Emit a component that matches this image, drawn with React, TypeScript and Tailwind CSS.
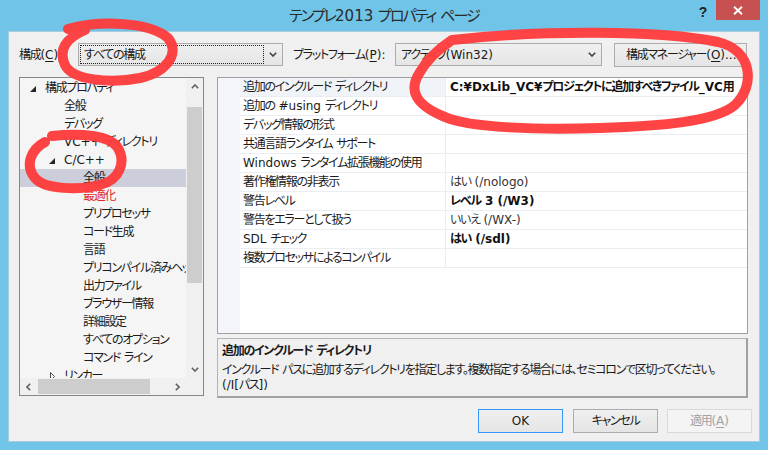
import React from "react";

const CJK_RE = /([\u3000-\u30ff\u3400-\u9fff\uff00-\uffef]+)/;

function J({ t, big }: { t: string; big?: boolean }) {
  const parts = t.split(CJK_RE);
  return (
    <span>
      {parts.map((p, i) =>
        p === "" ? null : CJK_RE.test(p) ? (
          <span key={i} className={big ? "tracking-[-1.9px]" : "tracking-[-1.3px]"}>
            {p}
          </span>
        ) : (
          <span key={i}>{p}</span>
        )
      )}
    </span>
  );
}

type TreeRow = {
  lvl: number;
  text: string;
  tri?: "open" | "closed";
  selected?: boolean;
  red?: boolean;
};

const treeRows: TreeRow[] = [
  { lvl: 0, text: "構成プロパティ", tri: "open" },
  { lvl: 1, text: "全般" },
  { lvl: 1, text: "デバッグ" },
  { lvl: 1, text: "VC++ ディレクトリ" },
  { lvl: 1, text: "C/C++", tri: "open" },
  { lvl: 2, text: "全般", selected: true },
  { lvl: 2, text: "最適化", red: true },
  { lvl: 2, text: "プリプロセッサ" },
  { lvl: 2, text: "コード生成" },
  { lvl: 2, text: "言語" },
  { lvl: 2, text: "プリコンパイル済みヘッダー" },
  { lvl: 2, text: "出力ファイル" },
  { lvl: 2, text: "ブラウザー情報" },
  { lvl: 2, text: "詳細設定" },
  { lvl: 2, text: "すべてのオプション" },
  { lvl: 2, text: "コマンド ライン" },
  { lvl: 1, text: "リンカー", tri: "closed" },
];

const PL = ["pl-[10px]", "pl-[29px]", "pl-[48px]"];

type GridRow = { label: string; value?: string; bold?: boolean };
const gridRows: GridRow[] = [
  { label: "追加のインクルード ディレクトリ", value: "C:¥DxLib_VC¥プロジェクトに追加すべきファイル_VC用", bold: true },
  { label: "追加の #using ディレクトリ" },
  { label: "デバッグ情報の形式" },
  { label: "共通言語ランタイム サポート" },
  { label: "Windows ランタイム拡張機能の使用" },
  { label: "著作権情報の非表示", value: "はい (/nologo)" },
  { label: "警告レベル", value: "レベル 3 (/W3)", bold: true },
  { label: "警告をエラーとして扱う", value: "いいえ (/WX-)" },
  { label: "SDL チェック", value: "はい (/sdl)", bold: true },
  { label: "複数プロセッサによるコンパイル" },
];

function ChevDown({ color = "#404040" }: { color?: string }) {
  return (
    <svg width="8" height="5" viewBox="0 0 8 5">
      <path d="M0.8 0.8 L4 4 L7.2 0.8" stroke={color} strokeWidth="1.6" fill="none" />
    </svg>
  );
}
function ChevUp() {
  return (
    <svg width="8" height="5" viewBox="0 0 8 5">
      <path d="M0.8 4.2 L4 1 L7.2 4.2" stroke="#606060" strokeWidth="1.6" fill="none" />
    </svg>
  );
}
function ChevLeft() {
  return (
    <svg width="5" height="8" viewBox="0 0 5 8">
      <path d="M4.2 0.8 L1 4 L4.2 7.2" stroke="#606060" strokeWidth="1.6" fill="none" />
    </svg>
  );
}
function ChevRight() {
  return (
    <svg width="5" height="8" viewBox="0 0 5 8">
      <path d="M0.8 0.8 L4 4 L0.8 7.2" stroke="#606060" strokeWidth="1.6" fill="none" />
    </svg>
  );
}

function Combo({ width, text, focus }: { width: string; text: string; focus?: boolean }) {
  return (
    <div className={`${width} h-[23px] flex items-center border border-[#acacac] bg-gradient-to-b from-[#f0f0f0] to-[#e5e5e5] p-[1px]`}>
      <div className={`flex-1 h-full flex items-center pl-[3px] whitespace-nowrap ${focus ? "border border-dotted border-[#222]" : "border border-transparent"}`}>
        <J t={text} />
      </div>
      <div className="w-[17px] h-full flex items-center justify-center">
        <ChevDown />
      </div>
    </div>
  );
}

function Button({ children, cls }: { children: React.ReactNode; cls: string }) {
  return (
    <div className={`w-[85px] h-[24px] flex items-center justify-center whitespace-nowrap ${cls}`}>{children}</div>
  );
}

export default function App() {
  return (
    <div className="relative w-[768px] h-[450px] overflow-hidden bg-[#6fc4e8] text-[12px] leading-none text-[#1a1a1a] [font-family:'DejaVu_Sans','Noto_Sans_CJK_JP',sans-serif] [font-feature-settings:'palt']">
      {/* title bar */}
      <div className="flex h-[31px]">
        <div className="w-[78px]" />
        <div className="flex-1 pt-[9px] text-center text-[15px] text-[#2a2a2a] whitespace-nowrap">
          <J t="テンプレ2013 プロパティ ページ" big />
        </div>
        <div className="w-[78px] flex items-start">
          <div className="w-[26px] pt-[5px] text-center text-[14px] font-bold text-[#222] [font-family:'Liberation_Sans',sans-serif]">?</div>
          <div className="w-[44px] h-[20px] bg-[#c75050] flex items-center justify-center">
            <svg width="10" height="9" viewBox="0 0 10 9">
              <path d="M1 0.8 L9 8.2 M9 0.8 L1 8.2" stroke="#ffffff" strokeWidth="1.9" />
            </svg>
          </div>
        </div>
      </div>

      {/* client */}
      <div className="mx-[8px] h-[411px] bg-[#f0f0f0] border border-[#a9cbdb] pl-[10px] pr-[11px] pt-[11px] flex flex-col">
        {/* top row */}
        <div className="flex items-center h-[23px]">
          <div className="w-[59px] whitespace-nowrap">
            <J t="構成" />(<span className="underline underline-offset-2">C</span>):
          </div>
          <Combo width="w-[205px]" text="すべての構成" focus />
          <div className="ml-[10px] w-[102px] whitespace-nowrap">
            <J t="プラットフォーム" />(<span className="underline underline-offset-2">P</span>):
          </div>
          <Combo width="w-[207px]" text="アクティブ(Win32)" />
          <div className="ml-[12px] w-[133px] h-[24px] border border-[#acacac] bg-gradient-to-b from-[#f0f0f0] to-[#e5e5e5] flex items-center pl-[11px] whitespace-nowrap">
            <J t="構成マネージャー" />(<span className="underline underline-offset-2">O</span>)...
          </div>
        </div>

        {/* main area */}
        <div className="flex mt-[11px]">
          {/* tree */}
          <div className="w-[185px] h-[319px] border border-[#828790] bg-[#f5f5f5] flex flex-col">
            <div className="flex h-[300px]">
              <div className="w-[166px] h-full overflow-hidden pt-[1px]">
                {treeRows.map((r, i) => (
                  <div
                    key={i}
                    className={`flex items-center h-[18px] whitespace-nowrap ${PL[r.lvl]} ${r.selected ? "bg-[#cccedb]" : ""}`}
                  >
                    <div className="w-[15px] shrink-0 h-full flex items-center">
                      {r.tri === "open" && (
                        <svg width="6" height="6" viewBox="0 0 6 6" className="mt-[2px]">
                          <polygon points="6,0 6,6 0,6" fill="#262626" />
                        </svg>
                      )}
                      {r.tri === "closed" && (
                        <svg width="6" height="9" viewBox="0 0 6 9" className="ml-[1px]">
                          <polygon points="0.5,0.5 4.5,4.5 0.5,8.5" fill="none" stroke="#4a4a4a" strokeWidth="1" />
                        </svg>
                      )}
                    </div>
                    <span className={`shrink-0 ${r.red ? "text-[#e02a2a]" : ""}`}>
                      <J t={r.text} />
                    </span>
                  </div>
                ))}
              </div>
              <div className="w-[17px] h-full bg-[#f0f0f0] flex flex-col">
                <div className="h-[17px] flex items-center justify-center">
                  <ChevUp />
                </div>
                <div className="mt-[12px] mx-[1px] h-[176px] bg-[#cdcdcd]" />
                <div className="flex-1" />
                <div className="h-[17px] flex items-center justify-center">
                  <ChevDown color="#606060" />
                </div>
              </div>
            </div>
            <div className="flex h-[17px]">
              <div className="w-[166px] h-full bg-[#f0f0f0] flex items-center">
                <div className="w-[17px] h-full flex items-center justify-center">
                  <ChevLeft />
                </div>
                <div className="ml-[1px] w-[112px] h-[15px] bg-[#cdcdcd]" />
                <div className="flex-1" />
                <div className="w-[17px] h-full flex items-center justify-center">
                  <ChevRight />
                </div>
              </div>
              <div className="w-[17px] h-full bg-[#f0f0f0]" />
            </div>
          </div>

          {/* right column */}
          <div className="ml-[13px] w-[531px] flex flex-col">
            <div className="h-[257px] border border-[#a0a0a0] bg-white flex">
              <div className="w-[22px] h-full bg-[#f3f5fa]" />
              <div className="flex-1 flex flex-col">
                {gridRows.map((r, i) => (
                  <div key={i} className="flex h-[19px] border-b border-[#eaeef3]">
                    <div className={`w-[206px] h-full flex items-center pl-[3px] whitespace-nowrap border-r border-[#eaeef3] ${i === 0 ? "bg-[#f0f3f8]" : ""}`}>
                      <J t={r.label} />
                    </div>
                    <div className={`flex-1 h-full flex items-center pl-[4px] whitespace-nowrap ${r.bold ? "font-bold text-[#111]" : "text-[#333]"}`}>
                      <J t={r.value ?? ""} />
                    </div>
                  </div>
                ))}
              </div>
            </div>
            <div className="mt-[4px] h-[60px] border border-[#b4b4b4] border-b-2 border-r-2 border-b-[#a0a0a0] border-r-[#a0a0a0] bg-[#f0f0f0] pl-[4px] pt-[5px]">
              <div className="font-bold h-[15px] leading-[15px] whitespace-nowrap">
                <J t="追加のインクルード ディレクトリ" />
              </div>
              <div className="mt-[4px] h-[15px] leading-[15px] whitespace-nowrap">
                <J t="インクルード パスに追加するディレクトリを指定します。複数指定する場合には、セミコロンで区切ってください。" />
              </div>
              <div className="h-[15px] leading-[15px] whitespace-nowrap">
                <J t="(/I[パス])" />
              </div>
            </div>
          </div>
        </div>

        {/* buttons */}
        <div className="flex justify-end mt-[11px] -mr-[4px]">
          <Button cls="border border-[#3399ff] bg-gradient-to-b from-[#f0f0f0] to-[#e5e5e5]">OK</Button>
          <Button cls="ml-[10px] border border-[#acacac] bg-gradient-to-b from-[#f0f0f0] to-[#e5e5e5]">
            <J t="キャンセル" />
          </Button>
          <Button cls="ml-[9px] border border-[#d9d9d9] bg-[#f4f4f4] text-[#a2a2a2]">
            <span>
              <J t="適用" />(<span className="underline underline-offset-2">A</span>)
            </span>
          </Button>
        </div>
      </div>

      {/* red markup */}
      <svg className="absolute inset-0 pointer-events-none" width="768" height="450" viewBox="0 0 768 450">
        <g stroke="#fe3c3c" strokeWidth="10" fill="none" strokeLinecap="round" strokeLinejoin="round" opacity="0.96">
          <path d="M68 29 C 100 20, 150 22, 168 38 C 180 52, 168 72, 140 78 C 110 84, 72 80, 65 65 C 58 50, 66 38, 85 30" />
          <path d="M452 40 C 540 30, 660 30, 718 42 C 752 50, 756 85, 735 105 C 715 122, 660 126, 600 128 C 540 130, 470 128, 445 117 C 415 105, 408 90, 420 72 C 428 58, 440 48, 452 40" />
          <path d="M52 136 C 80 133, 110 135, 118 148 C 126 162, 120 180, 100 185 C 80 190, 45 190, 35 178 C 25 166, 30 150, 45 142" />
        </g>
      </svg>
    </div>
  );
}
